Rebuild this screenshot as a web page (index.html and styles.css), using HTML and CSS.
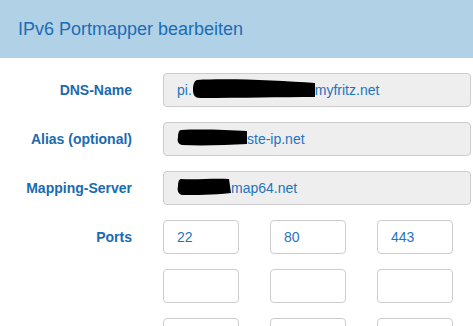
FILE: index.html
```html
<!DOCTYPE html>
<html lang="de">
<head>
    <meta charset="UTF-8">
    <title>IPv6 Portmapper bearbeiten</title>
    <link rel="stylesheet" href="styles.css">
</head>
<body>
<div class="dialog">
    <div class="head">IPv6 Portmapper bearbeiten</div>
    <div class="form">
        <div class="row">
            <label>DNS-Name</label>
            <div class="field">pi.<span class="blob blob-dns"><svg width="123" height="20" viewBox="0 0 123 20"><path d="M5 1 C40 -1 90 2 123 4 L123 18 C90 18 50 19 8 19 C3 19 1 16 1 11 C1 6 2 2 5 1 Z"/></svg></span>myfritz.net</div>
        </div>
        <div class="row">
            <label>Alias (optional)</label>
            <div class="field"><span class="blob blob-alias"><svg width="70" height="17" viewBox="0 0 70 17"><path d="M4 1 C25 0 50 1 70 2 L70 15 C50 16 25 17 5 16 C1 15 0 12 1 8 C1 4 2 1 4 1 Z"/></svg></span>ste-ip.net</div>
        </div>
        <div class="row">
            <label>Mapping-Server</label>
            <div class="field"><span class="blob blob-map"><svg width="54" height="18" viewBox="0 0 54 18"><path d="M4 1 C20 2 35 0 52 1 L54 15 C35 17 20 17 5 17 C1 16 0 12 1 8 C1 4 2 1 4 1 Z"/></svg></span>map64.net</div>
        </div>
        <div class="row ports">
            <label>Ports</label>
            <div class="grid">
                <div class="port">22</div>
                <div class="port">80</div>
                <div class="port">443</div>
                <div class="port"></div>
                <div class="port"></div>
                <div class="port"></div>
                <div class="port"></div>
                <div class="port"></div>
                <div class="port"></div>
            </div>
        </div>
    </div>
</div>
</body>
</html>
```

FILE: styles.css
```css
* {
    padding: 0;
    margin: 0;
    box-sizing: border-box;
}

body {
    font-family: "Liberation Sans", Arial, sans-serif;
    background: #fff;
    width: 473px;
    height: 326px;
    overflow: hidden;
}

.head {
    height: 58px;
    background: #b1d1e7;
    color: #1b6db5;
    font-size: 18px;
    line-height: 58px;
    padding-left: 18px;
}

.form {
    padding-top: 15px;
    display: flex;
    flex-direction: column;
    gap: 15px;
}

.row {
    display: flex;
    align-items: center;
    gap: 31px;
}

.row label {
    width: 132px;
    text-align: right;
    font-weight: bold;
    font-size: 14px;
    color: #1a6ab0;
}

.ports {
    align-items: flex-start;
}

.ports label {
    line-height: 34px;
}

.field {
    width: 308px;
    height: 34px;
    background: #eeeeee;
    border: 1px solid #cccccc;
    border-radius: 4px;
    padding-left: 13px;
    font-size: 14px;
    line-height: 32px;
    color: #1f74c0;
    white-space: nowrap;
    display: flex;
    align-items: center;
}

.blob {
    display: inline-block;
    line-height: 0;
}

.blob svg path {
    fill: #000;
}

.blob-dns {
    margin-top: -3px;
}

.blob-alias {
    margin-top: -4px;
}

.blob-map {
    margin-top: -2px;
}

.grid {
    display: grid;
    grid-template-columns: repeat(3, 76px);
    column-gap: 31px;
    row-gap: 15px;
}

.port {
    height: 34px;
    border: 1px solid #cccccc;
    border-radius: 4px;
    padding-left: 13px;
    font-size: 14px;
    line-height: 32px;
    color: #1f74c0;
}
```
